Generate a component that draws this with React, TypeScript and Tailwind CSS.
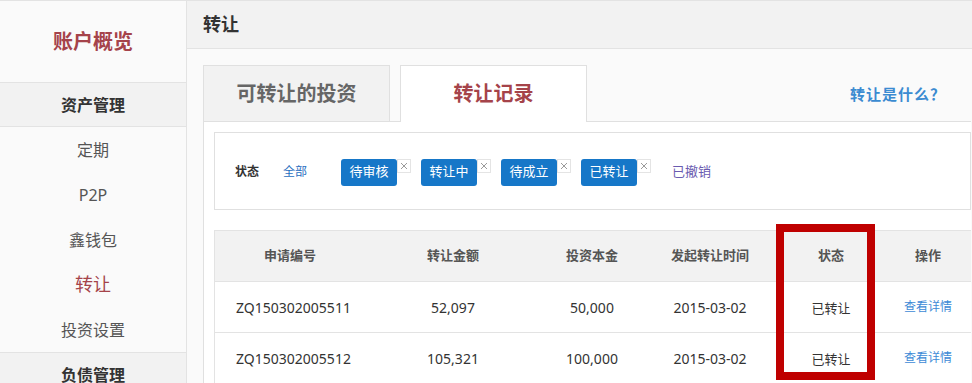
import React from "react";

const statusTags = ["待审核", "转让中", "待成立", "已转让"];

const cols = [
  { title: "申请编号", w: "w-[150px]" },
  { title: "转让金额", w: "w-[176px]" },
  { title: "投资本金", w: "w-[102px]" },
  { title: "发起转让时间", w: "w-[134px]" },
  { title: "状态", w: "w-[108px]" },
  { title: "操作", w: "w-[86px]" },
];

const rows = [
  ["ZQ150302005511", "52,097", "50,000", "2015-03-02", "已转让"],
  ["ZQ150302005512", "105,321", "100,000", "2015-03-02", "已转让"],
];

export default function App() {
  return (
    <div className="relative w-[972px] h-[383px] overflow-hidden flex border-t border-[#e3e3e3] font-['Noto_Sans','Noto_Sans_CJK_SC',sans-serif] text-[#333]">
      {/* Sidebar */}
      <aside className="w-[187px] shrink-0 bg-[#fafafa] border-r border-[#e3e3e3] flex flex-col">
        <div className="h-[81px] shrink-0 flex items-center justify-center text-[20px] font-bold text-[#a5434a]">
          账户概览
        </div>
        <div className="h-[45px] shrink-0 flex items-center justify-center bg-[#f2f2f2] border-y border-[#e3e3e3] text-[16px] font-bold text-[#333]">
          资产管理
        </div>
        <div className="flex flex-col shrink-0">
          <div className="h-[45px] shrink-0 flex items-center justify-center text-[16px] text-[#555]">定期</div>
          <div className="h-[45px] shrink-0 flex items-center justify-center text-[16px] text-[#555]">P2P</div>
          <div className="h-[45px] shrink-0 flex items-center justify-center text-[16px] text-[#555]">鑫钱包</div>
          <div className="h-[45px] shrink-0 flex items-center justify-center text-[18px] text-[#a5434a]">转让</div>
          <div className="h-[45px] shrink-0 flex items-center justify-center text-[16px] text-[#555]">投资设置</div>
        </div>
        <div className="h-[45px] shrink-0 flex items-center justify-center bg-[#f2f2f2] border-t border-[#e3e3e3] text-[16px] font-bold text-[#333]">
          负债管理
        </div>
      </aside>

      {/* Main */}
      <main className="flex-1 bg-[#fafafa] flex flex-col">
        <div className="h-[48px] shrink-0 bg-[#f2f2f2] border-b border-[#e3e3e3] flex items-center pl-[16px] text-[18px] font-bold text-[#333]">
          转让
        </div>
        <div className="pl-[16px] pt-[16px]">
          {/* Tabs */}
          <div className="flex items-end w-[768px] h-[57px] border-b border-[#e0e0e0]">
            <div className="w-[187px] h-[57px] -mb-px flex items-center justify-center bg-[#f2f2f2] border border-[#e0e0e0] text-[20px] font-bold text-[#666]">
              可转让的投资
            </div>
            <div className="ml-[10px] w-[187px] h-[57px] -mb-px flex items-center justify-center bg-white border border-b-0 border-[#e0e0e0] text-[20px] font-bold text-[#a5434a]">
              转让记录
            </div>
            <div className="flex-1 h-full flex items-center justify-end pr-[25px] pt-[2px] text-[15px] tracking-[1px] font-bold text-[#3b8bd1] font-['Noto_Sans_CJK_SC',sans-serif]">
              转让是什么？
            </div>
          </div>
          {/* Panel */}
          <div className="w-[768px] bg-white border-l border-[#e0e0e0] pl-[10px] pt-[10px]">
            <div className="h-[78px] border border-[#e0e0e0] flex items-center pl-[20px] pt-[2px] text-[12px]">
              <span className="font-bold text-[#333]">状态</span>
              <span className="ml-[24px] text-[#2a6fc0]">全部</span>
              <div className="ml-[34px] flex items-start">
                {statusTags.map((t) => (
                  <div key={t} className="flex items-start mr-[10px]">
                    <div className="w-[56px] h-[27px] rounded-[3px] bg-[#1677c8] text-white text-[13px] flex items-center justify-center">
                      {t}
                    </div>
                    <div className="w-[14px] h-[14px] border border-[#e4e4e4] bg-white flex items-center justify-center">
                      <svg width="8" height="8" viewBox="0 0 8 8">
                        <path d="M1 1L7 7M7 1L1 7" stroke="#9a9a9a" strokeWidth="1" />
                      </svg>
                    </div>
                  </div>
                ))}
              </div>
              <span className="ml-[11px] text-[13px] text-[#6a5bb0]">已撤销</span>
            </div>
            {/* Table */}
            <div className="mt-[20px] border-t border-l border-[#e3e3e3]">
              <div className="flex h-[51px] bg-[#f2f2f2] border-b border-[#e3e3e3]">
                {cols.map((c) => (
                  <div key={c.title} className={`${c.w} flex items-center justify-center text-[13px] font-bold text-[#555]`}>
                    {c.title}
                  </div>
                ))}
              </div>
              {rows.map((r) => (
                <div key={r[0]} className="flex h-[51px] border-b border-[#e3e3e3] text-[14px] text-[#333]">
                  <div className="w-[150px] flex items-center pl-[21px]">{r[0]}</div>
                  <div className="w-[176px] flex items-center justify-center">{r[1]}</div>
                  <div className="w-[102px] flex items-center justify-center">{r[2]}</div>
                  <div className="w-[134px] flex items-center justify-center">{r[3]}</div>
                  <div className="w-[108px] flex items-center justify-center pt-[3px] text-[13px]">{r[4]}</div>
                  <div className="w-[86px] flex items-center justify-center text-[12px] text-[#3d8ad6]">查看详情</div>
                </div>
              ))}
            </div>
          </div>
        </div>
      </main>

      {/* Annotation box */}
      <div className="absolute left-[776px] top-[223px] w-[99px] h-[156px] border-[8px] border-[#bf0000]" />
    </div>
  );
}
